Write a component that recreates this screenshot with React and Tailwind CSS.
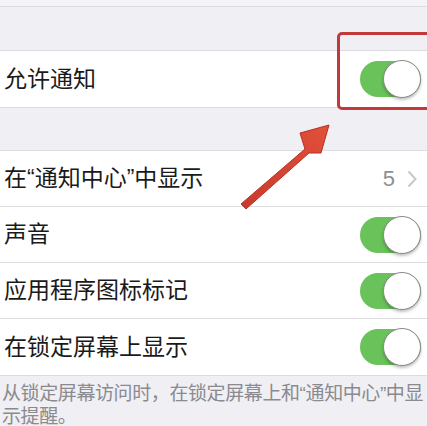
import React from 'react';

const FONT = { fontFamily: '"Liberation Sans", "Noto Sans CJK SC", sans-serif' };

function Toggle() {
  return (
    <div className="relative h-[36px] w-[61px] rounded-full bg-[#69c35a]">
      <div className="absolute right-0 top-[-1px] h-[38px] w-[38px] rounded-full border border-[#8a8a8a] bg-white shadow-[0_2px_3px_rgba(0,0,0,0.25)]" />
    </div>
  );
}

function Row({ label, children, last }) {
  return (
    <div className={`flex h-[56px] items-center justify-between bg-white pl-[4px] pr-[6px] ${last ? '' : 'border-b border-[#dcdce0]'}`}>
      <span className="text-[23px] text-[#1a1a1a]">{label}</span>
      {children}
    </div>
  );
}

export default function App() {
  return (
    <div className="relative h-[426px] w-[427px] overflow-hidden bg-[#efeff4]" style={FONT}>
      <div className="h-[7px] border-b border-[#dcdce0] bg-[#f4f4f7]" />
      <div className="h-[43px]" />

      <div className="border-y border-[#dcdce0]">
        <Row label="允许通知" last>
          <Toggle />
        </Row>
      </div>

      <div className="h-[42px]" />

      <div className="border-y border-[#dcdce0]">
        <Row label="在“通知中心”中显示">
          <div className="flex items-center gap-[12px] pr-[4px] text-[#8e8e93]">
            <span className="text-[22px]">5</span>
            <svg width="10" height="18" viewBox="0 0 10 18" fill="none" stroke="#c7c7cc" strokeWidth="2">
              <path d="M1.5 1.5 L8.5 9 L1.5 16.5" />
            </svg>
          </div>
        </Row>
        <Row label="声音">
          <Toggle />
        </Row>
        <Row label="应用程序图标标记">
          <Toggle />
        </Row>
        <Row label="在锁定屏幕上显示" last>
          <Toggle />
        </Row>
      </div>

      <p className="pl-[2px] pt-[6px] text-[19px] leading-[23px] tracking-[-0.4px] text-[#8a8a8f]">
        从锁定屏幕访问时，在锁定屏幕上和“通知中心”中显示提醒。
      </p>

      <div className="absolute left-[337px] top-[32px] h-[78px] w-[100px] rounded-[5px] border-[3px] border-[#c2393c]" />

      <svg className="absolute left-0 top-0" width="427" height="426" viewBox="0 0 427 426">
        <defs>
          <linearGradient id="ar" x1="0" y1="1" x2="1" y2="0">
            <stop offset="0" stopColor="#c93a2c" />
            <stop offset="1" stopColor="#e0503a" />
          </linearGradient>
        </defs>
        <path
          d="M241 204 L305 149 L300 133 L329 125 L321 153 L309 153 L246 209 Z"
          fill="url(#ar)"
          stroke="#b83024"
          strokeWidth="1"
          strokeLinejoin="round"
        />
      </svg>
    </div>
  );
}
